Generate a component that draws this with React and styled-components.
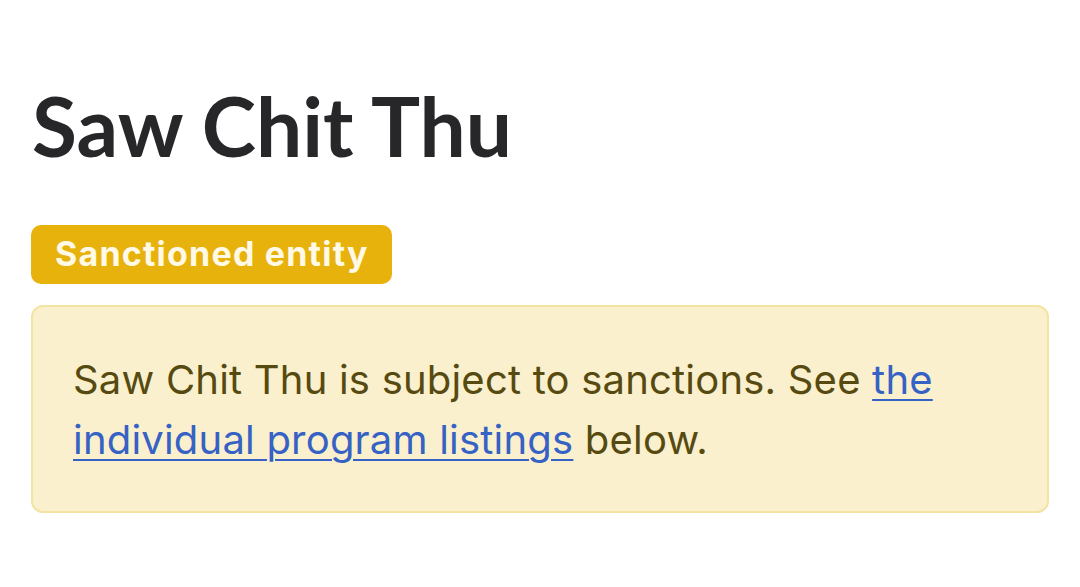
import React from "react";
import styled, { createGlobalStyle } from "styled-components";

const Global = createGlobalStyle`
  html, body { margin: 0; padding: 0; background: #ffffff; }
  body { font-family: Inter, "Liberation Sans", sans-serif; }
`;

const Page = styled.main`
  padding: 77px 31px 0 31px;
  width: 1018px;
  display: flex;
  flex-direction: column;
  align-items: flex-start;
`;

const Title = styled.h1`
  margin: 0 0 0 1px;
  font-family: Lato, "Noto Sans", sans-serif;
  font-weight: 700;
  font-size: 82px;
  line-height: 96px;
  color: #27272a;
  letter-spacing: 0;
`;

const Badge = styled.span`
  margin-top: 52px;
  display: inline-flex;
  align-items: center;
  height: 59px;
  padding: 0 23px 2px 24px;
  border-radius: 10px;
  background: #e8b20c;
  color: #fff9e6;
  font-family: Inter, sans-serif;
  font-weight: 700;
  font-size: 34px;
  letter-spacing: 1.2px;
  box-sizing: border-box;
`;

const Notice = styled.div`
  margin-top: 21px;
  width: 100%;
  box-sizing: border-box;
  padding: 43px 40px 41px 40px;
  background: #faf0cd;
  border: 2px solid #f3e4a2;
  border-radius: 12px;
  color: #574a10;
  font-family: Inter, sans-serif;
  font-size: 40px;
  line-height: 60px;
  letter-spacing: 0.2px;
`;

const Text = styled.p`
  margin: 0;
`;

const Link = styled.a`
  color: #3562c4;
  text-decoration: underline;
  text-decoration-thickness: 2px;
  text-underline-offset: 5px;
`;

export default function App() {
  return (
    <>
      <Global />
      <Page>
        <Title>Saw Chit Thu</Title>
        <Badge>Sanctioned entity</Badge>
        <Notice>
          <Text>
            Saw Chit Thu is subject to sanctions. See{" "}
            <Link href="#listings">the individual program listings</Link>{" "}
            below.
          </Text>
        </Notice>
      </Page>
    </>
  );
}
